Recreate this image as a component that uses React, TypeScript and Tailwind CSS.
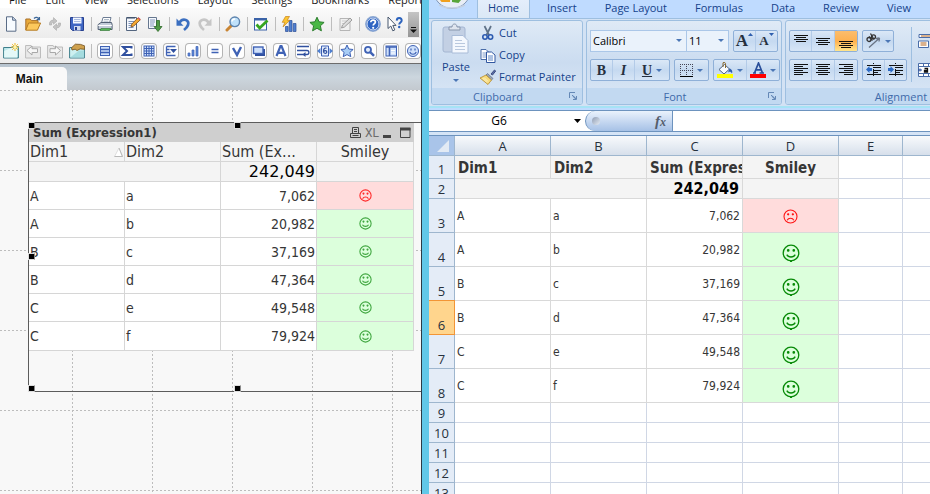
import type { ReactNode } from "react";

const UI = "font-['Open_Sans','Noto_Sans',sans-serif]";
const TAHOMA = "font-['DejaVu_Sans_Condensed','DejaVu_Sans',sans-serif]";

type Row = { d1: string; d2: string; sum: string; happy: boolean };
const ROWS: Row[] = [
  { d1: "A", d2: "a", sum: "7,062", happy: false },
  { d1: "A", d2: "b", sum: "20,982", happy: true },
  { d1: "B", d2: "c", sum: "37,169", happy: true },
  { d1: "B", d2: "d", sum: "47,364", happy: true },
  { d1: "C", d2: "e", sum: "49,548", happy: true },
  { d1: "C", d2: "f", sum: "79,924", happy: true },
];

function Svg({ w = 16, h = 16, children, className = "" }: { w?: number; h?: number; children: ReactNode; className?: string }) {
  return (
    <svg width={w} height={h} viewBox={`0 0 ${w} ${h}`} fill="none" className={`block shrink-0 ${className}`} aria-hidden="true">
      {children}
    </svg>
  );
}

function Smiley({ size, happy, color, nub = false }: { size: number; happy: boolean; color: string; nub?: boolean }) {
  return (
    <svg width={size} height={size} viewBox="0 0 18 18" fill="none" stroke={color} strokeWidth={size > 14 ? 1.3 : 1.5} className="mx-auto block" role="img" aria-label={happy ? "Happy" : "Sad"}>
      <circle cx="9" cy="9" r="7.8" />
      <circle cx="6.2" cy="6.4" r="0.7" fill={color} />
      <circle cx="11.8" cy="6.4" r="0.7" fill={color} />
      {happy ? <path d="M4.8 10.6c1.6 3.2 6.8 3.2 8.4 0" /> : <path d="M5 13.4c1.4-3 6.6-3 8 0" />}
      {nub && <path d="M8 17.3h2" strokeWidth="1.6" />}
    </svg>
  );
}

/* ---------- document window, left ---------- */

const MENU = ["File", "Edit", "View", "Selections", "Layout", "Settings", "Bookmarks", "Reports"];

const fileIcons: [string, ReactNode][] = [
  ["New", <Svg><path d="M3.5.8h6.2l3.2 3.2v11.2H3.5z" fill="#f7fbff" stroke="#5a6c86" /><path d="M9.6 1v3.2h3.2" fill="#c9d8ea" stroke="#5a6c86" /></Svg>],
  ["Open", <Svg><path d="M.8 14V3h4.4l1.3 1.6H13V8" fill="#e8a93a" stroke="#a8702a" /><path d="M.8 14.2 3.6 7h12L12.4 14.2z" fill="#fcc85c" stroke="#b67b24" /><path d="M9 2.4c2-1.8 4-1 4.8.6m.6-2v2.6h-2.8" stroke="#3e6898" strokeWidth="1.3" /></Svg>],
  ["Reload", <Svg><path d="M2.5 9c-.6-3 1.4-5 4-5V1.6L10 5 6.500 8.200V6.200C5 6.200 4.400 7.400 4.600 9z" fill="#c4c4c4" stroke="#aaa" strokeWidth=".6" /><path d="M13.500 7c.6 3-1.400 5-4 5v2.400L6 11l3.500-3.200v2c1.500 0 2.100-1.200 1.900-2.800z" fill="#c4c4c4" stroke="#aaa" strokeWidth=".6" /></Svg>],
  ["Save", <Svg><path d="M1.500 1.500h13v13h-11l-2-2z" fill="#3f66c4" stroke="#27408f" /><rect x="4" y="1.500" width="8.500" height="6" fill="#f4f8ff" /><path d="M5 3.500h6.500M5 5.500h6.500" stroke="#a9bbe0" /><rect x="5" y="10" width="6.500" height="4.500" fill="#cfd9ee" /><rect x="6" y="11" width="2" height="3" fill="#27408f" /></Svg>],
];

const printIcon: [string, ReactNode][] = [
  ["Print", <Svg><path d="M4.500 7 6 1.500h8L12.500 7z" fill="#fff" stroke="#6c7c94" /><path d="M7 3.500h5M6.500 5.200h5" stroke="#9ab" strokeWidth=".8" /><path d="M1.200 8.500 4 6.500h10.500l.6 2v5h-14z" fill="#c3ccd8" stroke="#536074" /><path d="M1.200 9.500h13.600" stroke="#fff" /><path d="M3 14.500h9.500l1.500-2H4z" fill="#57b957" stroke="#3a7a3c" strokeWidth=".7" /></Svg>],
];

const editIcons: [string, ReactNode][] = [
  ["Edit Script", <Svg><path d="M1.500 1.500h10v13h-10z" fill="#f5f8fd" stroke="#53657f" /><path d="M3 1v2M5 1v2M7 1v2M9 1v2" stroke="#35465f" /><path d="M3.500 5.500h6M3.500 7.500h5M3.500 9.500h3M3.500 11.500h5" stroke="#7d93b8" /><path d="m6 11 .8-3L13 1.800l2.300 2L8.800 10z" fill="#f4a934" stroke="#7f4d16" strokeWidth=".8" /><path d="m12.500 2.300 1-1.100 2.200 2-1 1.100z" fill="#d4545a" /></Svg>],
  ["Reload Data", <Svg><path d="M1.500 1.500h8v11h-8z" fill="#f5f8fd" stroke="#66778f" /><path d="M3 4h5M3 6h5M3 8h4M3 10h4" stroke="#8297ba" /><path d="M9.500 4.500h3v6h2.500l-4 5-4-5h2.500z" fill="#4f9a46" stroke="#2f6a2b" strokeWidth=".8" /></Svg>],
];

const undoIcons: [string, ReactNode][] = [
  ["Undo", <Svg><path d="M4.500 6.500C8 1.500 15 4 13 9c-.7 2-2 3.500-4 5" stroke="#3b6fc0" strokeWidth="2.800" /><path d="M1.500 2.500v7.200h7z" fill="#3b6fc0" /></Svg>],
  ["Redo", <Svg><path d="M11.500 6.500C8 1.500 1 4 3 9c.7 2 2 3.500 4 5" stroke="#c6c6c6" strokeWidth="2.800" /><path d="M14.500 2.500v7.200h-7z" fill="#c6c6c6" /></Svg>],
];

const searchIcon: [string, ReactNode][] = [
  ["Search", <Svg><path d="m2 14 4.500-4.500" stroke="#c98534" strokeWidth="3" strokeLinecap="round" /><circle cx="9.800" cy="5.800" r="4.800" fill="#bfe1fa" stroke="#5d83ad" strokeWidth="1.400" /><path d="M7 5.500c.3-1.800 1.800-2.500 3.200-2.400" stroke="#fff" strokeWidth="1.500" /></Svg>],
];

const checkIcon: [string, ReactNode][] = [
  ["Current Selections", <Svg><rect x="1.500" y="2.500" width="12" height="11.500" fill="#fafdff" stroke="#3b62a8" /><path d="M1.500 3.500h12" stroke="#3b62a8" strokeWidth="2" /><path d="m3.500 8.500 3.200 3.500 7.800-7.500" stroke="#35a51f" strokeWidth="2.800" /></Svg>],
];

const chartIcon: [string, ReactNode][] = [
  ["Quick Chart", <Svg><path d="M4.500 10.500h2.600v5H4.500zM8.200 4.500h2.800v11H8.200zM12.200 7.500H15v8h-2.800z" fill="#4f7fd0" stroke="#2c4f96" strokeWidth=".7" /><path d="M4.500.5h4L6.200 4.300h2.600L2 11l1.800-4.700H1.200z" fill="#fcc530" stroke="#c7821a" strokeWidth=".7" /></Svg>],
];

const starIcon: [string, ReactNode][] = [
  ["Add Bookmark", <Svg><path d="m8 1.200 2.100 4.600 5 .6-3.700 3.400 1 5L8 12.300l-4.400 2.500 1-5L.9 6.400l5-.6z" fill="#49b845" stroke="#2b7d2c" /></Svg>],
];

const noteIcon: [string, ReactNode][] = [
  ["Notes", <Svg><path d="M3 2.500h10v12H3z" fill="#f0f0f0" stroke="#b5b5b5" /><path d="M5 5h5M5 7.500h4" stroke="#ccc" /><path d="m4.500 12 1-3 7.500-7 2 2-7.500 7z" fill="#ddd" stroke="#9c9c9c" /></Svg>],
];

const helpIcons: [string, ReactNode][] = [
  ["Help", <Svg><circle cx="8" cy="8" r="7.300" fill="#2f65c3" stroke="#8ea9d2" strokeWidth="1.200" /><circle cx="8" cy="8" r="6" stroke="#fff" strokeWidth=".8" /><path d="M5.800 6.200c0-3 4.600-2.700 4.600-.2 0 1.600-2.200 1.700-2.200 3.600" stroke="#fff" strokeWidth="1.700" /><circle cx="8.200" cy="11.800" r="1.100" fill="#fff" /></Svg>],
  ["What's This", <Svg><path d="M1 1v11.500l2.800-2.500 2 4.800 2-.9-2-4.500H9z" fill="#fff" stroke="#46566c" /><path d="M9.700 4.600c.2-3.600 5-3.200 5 0 0 2-2.500 2-2.500 4" stroke="#2b62bd" strokeWidth="1.900" /><circle cx="12.200" cy="11" r="1.200" fill="#2b62bd" /></Svg>],
];

const fileGroups = [fileIcons, printIcon, editIcons, undoIcons, searchIcon, checkIcon, chartIcon, starIcon, noteIcon, helpIcons];

const sheetIcons: [string, ReactNode][] = [
  ["Add Sheet", <Svg><path d="M.6 4.500h9v-1h5.800v11.500H.6z" fill="#bfe9ec" stroke="#3f7f8c" /><path d="M1.200 8 8 5h6v9.500H1.200z" fill="#e4f8f8" /><path d="M12 0v8M8 4h8M9.200 1.200l5.600 5.600M14.800 1.200 9.200 6.800" stroke="#f0b929" /><circle cx="12" cy="4" r="1.700" fill="#fff3a8" /></Svg>],
  ["Previous Sheet", <Svg><path d="M.6 5V2.500h5.500L7 4h8.500v11H.6z" fill="#e9e9e9" stroke="#bcbcbc" /><path d="m2 7.500 5-4.500v2.700h5.500v3.800H7V12z" fill="#f7f7f7" stroke="#a8a8a8" /></Svg>],
  ["Next Sheet", <Svg><path d="M.6 5V2.500h5.500L7 4h8.500v11H.6z" fill="#e9e9e9" stroke="#bcbcbc" /><path d="M13.500 7.500 8.500 3v2.700H3v3.800h5.500V12z" fill="#f7f7f7" stroke="#a8a8a8" /></Svg>],
  ["Sheet Properties", <Svg><path d="M.6 4.500h14.800v10.500H.6z" fill="#cdf0f0" stroke="#3f7f8c" /><path d="M1.200 14.400 10 7.500h5v7z" fill="#a5dcdf" /><path d="m2.500 4.800 3.800-3.600 5.200.2 4.200 1.500v3.400l-4.500-.4L8 7.500 6.200 6.200 3 7z" fill="#cfa14e" stroke="#6d4b18" strokeWidth=".8" /></Svg>],
];

const B = "#3f62b5";
const objectIcons: [string, ReactNode][] = [
  ["List Box", <Svg><rect x="3.500" y="3.500" width="9" height="9" fill="#cfe0fa" stroke={B} /><path d="M3.500 6.500h9M3.500 9.500h9" stroke={B} strokeWidth="1.400" /></Svg>],
  ["Statistics Box", <Svg><path d="M12.500 5.500V4H4l4 4-4 4h8.500v-1.500" stroke="#30509f" strokeWidth="2" /></Svg>],
  ["Table Box", <Svg><rect x="3" y="3" width="10" height="10" fill="#cfe0fa" stroke={B} /><path d="M3 5.500h10M3 8h10M3 10.500h10M5.500 3v10M8 3v10M10.500 3v10" stroke={B} /></Svg>],
  ["Multi Box", <Svg><path d="M3.500 3.500h9M3.500 6.500h3M3.500 12.500h9M3.500 9.500h4M3.500 3.500v9" stroke={B} strokeWidth="1.300" /><path d="M7 6h7l-3.500 4z" fill="#30509f" /></Svg>],
  ["Chart", <Svg><path d="M3 10h2v3H3zM7 7h2v6H7zM11 3.500h2V13h-2z" fill="#5b88d8" stroke={B} strokeWidth=".7" /></Svg>],
  ["Input Box", <Svg><path d="M4.500 6.500h7M4.500 9.500h7" stroke={B} strokeWidth="1.700" /></Svg>],
  ["Current Selections Box", <Svg><path d="m4 5 4 7 4-8" stroke={B} strokeWidth="2.400" /></Svg>],
  ["Button", <Svg><rect x="4" y="6" width="10" height="7" fill="#30509f" /><rect x="2.500" y="4" width="9.500" height="6.500" fill="#cfe0fa" stroke={B} strokeWidth="1.400" /></Svg>],
  ["Text Object", <Svg><path d="m3.500 13 4-10h1l4 10M5 9.800h6" stroke={B} strokeWidth="2.200" /></Svg>],
  ["Line Object", <Svg><path d="M2 3.500h12M2 7.500h10M2 11.500h8" stroke="#30509f" strokeWidth="1.400" /><path d="M12 7.500c2.500 0 2.500 4 0 4h-3" stroke="#30509f" strokeWidth="1.300" /><path d="M10.500 9v5L7.500 11.500z" fill="#30509f" /></Svg>],
  ["Slider", <Svg><path d="M4.500 3h7v10h-7z" fill="#e3edfc" stroke={B} /><path d="M0 8l3.500-3v6zM16 8l-3.500-3v6z" fill="#4f7fd0" /><path d="M9.500 5.200c-2-.7-3 .6-3 3 0 3 3.300 2.700 3.300.9 0-1.800-2.500-1.800-3.200-.3" stroke="#30509f" strokeWidth="1.200" /></Svg>],
  ["Bookmark Object", <Svg><path d="m8 2 1.800 4 4.300.5-3.200 2.900.9 4.300L8 11.600l-3.800 2.100.9-4.300L1.900 6.500l4.300-.5z" fill="#a8cdf5" stroke={B} /></Svg>],
  ["Search Object", <Svg><circle cx="7" cy="6.800" r="3" fill="#e3edfc" stroke={B} strokeWidth="1.800" /><path d="m9.500 9.300 3.500 3.500" stroke={B} strokeWidth="2.400" /></Svg>],
  ["Container", <Svg><rect x="3" y="3" width="10.500" height="10" fill="#cfe0fa" stroke={B} /><path d="M3 4h10.500M6.500 4v9" stroke={B} strokeWidth="1.600" /><path d="M8 7.500h4M8 10h4" stroke="#fff" /></Svg>],
  ["Custom Object", <Svg><circle cx="8" cy="8" r="5.500" fill="#cfe0fa" stroke={B} /><path d="M6 5.500v2M10 5.500v2M4.800 9c1 3 5.400 3 6.400 0" stroke={B} strokeWidth="1.200" /></Svg>],
];

function ToolSep() {
  return (
    <span className="flex w-[6px] shrink-0 justify-center">
      <span className="h-[14px] w-px bg-[#bdbdbd]" />
    </span>
  );
}

function Handle({ place }: { place: string }) {
  return <span className={`absolute size-[7px] border border-[#dcdcdc] border-r-[#8a8a8a] bg-black ${place}`} />;
}

function CanvasGrid() {
  return (
    <svg className="absolute inset-0 h-full w-full" aria-hidden="true">
      <defs>
        <pattern id="canvas-grid" width="80" height="80" patternUnits="userSpaceOnUse">
          <path d="M0 .5h80" stroke="#bdbdbd" strokeDasharray="2 2" />
          <path d="M72.500 0v80" stroke="#bdbdbd" strokeDasharray="2 2" />
        </pattern>
      </defs>
      <rect width="100%" height="100%" fill="url(#canvas-grid)" />
    </svg>
  );
}

function StraightTable() {
  const line = "border-b border-r border-[#d6d6d6]";
  return (
    <table className={`w-[385px] table-fixed border-separate border-spacing-0 text-[#363636] ${TAHOMA}`}>
      <colgroup>
        <col className="w-[96px]" />
        <col className="w-[96px]" />
        <col className="w-[96px]" />
        <col className="w-[97px]" />
      </colgroup>
      <thead>
        <tr className="bg-[#f4f4f4] text-[16px] leading-4">
          <th className={`h-[20px] p-0 pl-px text-left font-normal ${line}`}>
            <span className="flex items-center justify-between">
              Dim1
              <Svg w={10} h={10}><path d="M.5 9.500 5 1l3.500 8.500z" fill="#fff" stroke="#dedede" /><path d="M5 1l3.500 8.500H.5" stroke="#b8b8b8" /></Svg>
            </span>
          </th>
          <th className={`p-0 pl-px text-left font-normal ${line}`}>Dim2</th>
          <th className={`p-0 pl-px text-left font-normal ${line}`}>Sum (Ex...</th>
          <th className={`p-0 text-center font-normal ${line}`}>Smiley</th>
        </tr>
        <tr className="bg-[#f4f4f4] leading-4">
          <td colSpan={2} className={`h-[20px] p-0 ${line}`} />
          <td className={`p-0 pr-px text-right font-['DejaVu_Sans',sans-serif] text-[16px] text-black ${line}`}>242,049</td>
          <td className={`p-0 ${line}`} />
        </tr>
      </thead>
      <tbody>
        {ROWS.map((r) => (
          <tr key={r.d2} className="h-[28px] bg-white text-[14px] leading-4 last:h-[29px]">
            <td className={`p-0 pl-px ${line}`}>{r.d1}</td>
            <td className={`p-0 pl-px ${line}`}>{r.d2}</td>
            <td className={`p-0 pr-px text-right ${line}`}>{r.sum}</td>
            <td className={`p-0 ${line} ${r.happy ? "bg-[#dcffdc]" : "bg-[#ffdcdc]"}`}>
              <Smiley size={13} happy={r.happy} color={r.happy ? "#3fa63f" : "#ff2a2a"} />
            </td>
          </tr>
        ))}
      </tbody>
    </table>
  );
}

function DocumentPane() {
  return (
    <section className="flex min-w-0 flex-col overflow-hidden bg-[#f8f8f8]">
      <nav className={`flex h-2 shrink-0 items-end gap-[19px] overflow-hidden bg-white pl-[9px] text-[11px] leading-4 whitespace-nowrap text-[#1a1a1a] ${UI}`}>
        {MENU.map((m) => (
          <button key={m} type="button">{m}</button>
        ))}
      </nav>
      <div className="flex h-[30px] shrink-0 items-center overflow-hidden bg-linear-to-b from-[#fbfbfb] to-[#ececec] pt-[2px]">
        {fileGroups.map((group, i) => (
          <div key={i} className="flex shrink-0 items-center">
            {i > 0 && <ToolSep />}
            {group.map(([label, icon]) => (
              <button key={label} type="button" aria-label={label} className="flex w-[22px] justify-center">{icon}</button>
            ))}
          </div>
        ))}
        <button type="button" aria-label="Toolbar options" className="ml-[2px] flex h-[25px] w-[11px] shrink-0 items-end justify-center bg-linear-to-b from-[#c4c4c4] to-[#969696] pb-1">
          <Svg w={7} h={6}><path d="M1 .5h5" stroke="#111" /><path d="M0 2.500h7L3.500 6z" fill="#111" /></Svg>
        </button>
      </div>
      <div className="flex h-[26px] shrink-0 items-center overflow-hidden border-b border-[#6c6c6c] bg-linear-to-b from-[#fbfbfb] to-[#ececec]">
        {sheetIcons.map(([label, icon]) => (
          <button key={label} type="button" aria-label={label} className="flex w-[22px] shrink-0 justify-center">{icon}</button>
        ))}
        <ToolSep />
        {objectIcons.map(([label, icon]) => (
          <span key={label} className="flex w-[22px] shrink-0 justify-center">
            <button type="button" aria-label={label} className="flex size-4 items-center justify-center rounded-[4px] bg-white ring-1 ring-[#b4b4b4] ring-inset">
              <Svg>{icon}</Svg>
            </button>
          </span>
        ))}
      </div>
      <div className="flex h-[26px] shrink-0 items-end bg-linear-to-b from-[#b6c3ce] via-[#ccd6de] to-[#c3c9cf]">
        <button type="button" className="h-[23px] w-[67px] rounded-tr-[5px] bg-[#f9f9f9] pr-2 font-['Liberation_Sans',Arial,sans-serif] text-[12px] font-bold text-[#111]">Main</button>
      </div>
      <main className="relative flex-1 overflow-hidden bg-[#f8f8f8] pt-8 pl-[28px]">
        <CanvasGrid />
        <article className="relative h-[270px] border border-r-0 border-[#5c5c5c]">
          <header className={`flex h-[19px] w-[385px] items-center justify-between bg-[#cfcfcf] pr-[3px] pl-[4px] ${TAHOMA}`}>
            <h2 className="text-[13px] leading-4 font-bold text-[#363636]">Sum (Expression1)</h2>
            <span className="flex items-center gap-[4px] text-[#444]">
              <button type="button" aria-label="Print"><Svg w={11} h={11}><path d="M2.500 6.500v-6h6v6M4 2.500h3M4 4.500h3M.5 6.500h10v4H.5zM2.500 8.500h6" stroke="#444" /></Svg></button>
              <button type="button" className="font-['Roboto','Open_Sans',sans-serif] text-[12px] leading-[14px] text-[#6c6c6c]">XL</button>
              <button type="button" aria-label="Minimize"><Svg w={9} h={11}><path d="M0 9.500h8" stroke="#444" strokeWidth="3" /></Svg></button>
              <button type="button" aria-label="Maximize" className="pl-1"><Svg w={11} h={11}><path d="M.5 1v9.500h9.500V1" stroke="#444" /><path d="M0 2h10.500" stroke="#444" strokeWidth="3" /></Svg></button>
            </span>
          </header>
          <StraightTable />
          <Handle place="-top-px -left-px" />
          <Handle place="-top-px left-[205px]" />
          <Handle place="top-[130px] -left-px" />
          <Handle place="-bottom-px -left-px" />
          <Handle place="-bottom-px left-[205px]" />
        </article>
      </main>
    </section>
  );
}

/* ---------- spreadsheet window, right ---------- */

function Caret() {
  return <Svg w={6} h={3}><path d="M0 0h6L3 3z" fill="#4b76b5" /></Svg>;
}

function Group({ title, width, children }: { title: string; width: string; children: ReactNode }) {
  return (
    <section className={`flex shrink-0 flex-col overflow-hidden rounded-[3px] border border-[#9ebfe0] bg-linear-to-b from-[#dfeaf6] via-[#cbdcf0] to-[#dbe8f6] ${width}`}>
      <div className="min-h-0 flex-1">{children}</div>
      <footer className="relative flex h-4 shrink-0 items-center justify-center bg-[#c2d9f1] pt-px pr-[18px] text-[11px] leading-4 text-[#3e6aaa]">
        {title}
        <button type="button" aria-label={`${title} options`} className="absolute right-[5px] bottom-[4px]">
          <Svg w={8} h={8}><path d="M.5 6V.5H6" stroke="#6488b6" /><path d="M3 3.500h1M7.500 4v3.500H4" stroke="#6488b6" /><path d="m4 4 3 3" stroke="#6488b6" strokeWidth="1.300" /></Svg>
        </button>
      </footer>
    </section>
  );
}

function Cluster({ children }: { children: ReactNode }) {
  return <div className="flex h-[22px] divide-x divide-[#b3cbe8] overflow-hidden rounded-[2px] border border-[#8fb0d8] bg-linear-to-b from-[#dbe8f7] via-[#c5d9f0] to-[#d6e5f6]">{children}</div>;
}

function Tool({ label, w, children, on = false }: { label: string; w: string; children: ReactNode; on?: boolean }) {
  return (
    <button type="button" aria-label={label} className={`flex items-center justify-center gap-1 ${w} ${on ? "bg-linear-to-b from-[#fbbd6d] via-[#fdb04e] to-[#ffe58c]" : ""}`}>
      {children}
    </button>
  );
}

const serif = "font-['Liberation_Serif',serif] font-bold text-[#26303e]";

function ClipboardGroup() {
  const items: [string, ReactNode][] = [
    ["Cut", <Svg><path d="M4.500 1 9 10M11 1 6.500 10" stroke="#5f7288" strokeWidth="1.700" /><circle cx="5" cy="12" r="2.200" stroke="#2c5ab0" strokeWidth="1.600" /><circle cx="10.500" cy="12" r="2.200" stroke="#2c5ab0" strokeWidth="1.600" /></Svg>],
    ["Copy", <Svg><path d="M1 2.500h5l3 3v7H1z" fill="#fff" stroke="#4a6da8" /><path d="M2.500 6h4M2.500 8h4M2.500 10h4" stroke="#7e9cca" /><path d="M6.500 5h5l3.500 3v7.500H6.500z" fill="#fff" stroke="#3157a0" /><path d="M8 9h5M8 11h5M8 13h5" stroke="#5d86c6" /></Svg>],
    ["Format Painter", <Svg><path d="m11 5 3.500-4 1.200 1L12.500 6z" fill="#5a6fa8" stroke="#3e4c80" /><path d="m7.500 4.500 5.500 5-1.500 1.500L6 6z" fill="#9aa5b8" stroke="#5f6b82" strokeWidth=".7" /><path d="M6 6 11.500 11 8 15.500 0 9z" fill="#f6d97a" stroke="#b58a2a" strokeWidth=".8" /><path d="m4 8.500 4 4M2.500 9 7 13.500" stroke="#fff4c4" /></Svg>],
  ];
  return (
    <Group title="Clipboard" width="w-[152px]">
      <div className="flex gap-[8px] pt-px pl-[8px] text-[11px] text-[#15428b]">
        <button type="button" className="flex w-[32px] flex-col items-center pt-px">
          <Svg w={28} h={32}>
            <rect x="1" y="4" width="22" height="25" rx="2" fill="#c3d0e4" stroke="#a4b6d2" />
            <path d="M7 7V4h3c0-4 5-4 5 0h3v3z" fill="#dfe5ee" stroke="#8795ab" />
            <path d="M10 12.500h11l5 5V30H10z" fill="#f4f8fe" stroke="#a9bcd8" />
            <path d="M13 17.500h7M13 20.500h10M13 23.500h10M13 26.500h10" stroke="#b9c8de" />
          </Svg>
          <span className="mt-1 leading-4">Paste</span>
          <span className="mt-1"><Caret /></span>
        </button>
        <div className="flex flex-col">
          {items.map(([label, icon]) => (
            <button key={label} type="button" className="flex h-[22px] items-center gap-[3px] whitespace-nowrap">
              {icon}
              {label}
            </button>
          ))}
        </div>
      </div>
    </Group>
  );
}

function Picker({ label, value, w }: { label: string; value: string; w: string }) {
  return (
    <label className={`relative block h-[22px] border border-[#abc7e8] bg-[#eaf2fb] ${w}`}>
      <select aria-label={label} className="block h-[20px] w-full appearance-none pl-[2px] text-[11px] leading-4 text-black" defaultValue={value}>
        <option>{value}</option>
      </select>
      <span className="pointer-events-none absolute top-2 right-[4px]"><Caret /></span>
    </label>
  );
}

function FontGroup() {
  return (
    <Group title="Font" width="w-[196px]">
      <div className="flex flex-col gap-[7px] pt-[9px] pl-[3px]">
        <div className="flex">
          <Picker label="Font name" value="Calibri" w="w-[97px]" />
          <Picker label="Font size" value="11" w="w-[43px] -ml-px" />
          <div className="ml-1">
            <Cluster>
              <Tool label="Grow font" w="w-[22px]"><span className={`flex text-[17px] leading-4 ${serif}`}>A<Svg w={5} h={3}><path d="M0 3h5L2.500 0z" fill="#2f5fae" /></Svg></span></Tool>
              <Tool label="Shrink font" w="w-[21px]"><span className={`flex text-[13px] leading-4 ${serif}`}>A<Svg w={5} h={3}><path d="M0 0h5L2.500 3z" fill="#2f5fae" /></Svg></span></Tool>
            </Cluster>
          </div>
        </div>
        <div className="flex gap-[4px]">
          <Cluster>
            <Tool label="Bold" w="w-[22px]"><span className={`text-[14px] ${serif}`}>B</span></Tool>
            <Tool label="Italic" w="w-[22px]"><span className={`text-[14px] italic ${serif}`}>I</span></Tool>
            <Tool label="Underline" w="w-[34px]"><span className={`text-[14px] underline ${serif}`}>U</span><Caret /></Tool>
          </Cluster>
          <Cluster>
            <Tool label="Borders" w="w-[33px]"><Svg w={13} h={13}><path d="M.5 0v12M6.500 0v12M12.500 0v12M0 .5h13M0 6.500h13" stroke="#445" strokeDasharray="1 1" /><path d="M0 12.500h13" stroke="#000" /></Svg><Caret /></Tool>
          </Cluster>
          <Cluster>
            <Tool label="Fill colour" w="w-[33px]"><Svg><path d="m2 7.500 5.500-5 5 4.500-5.500 5z" fill="#f7fbff" stroke="#4a5f80" /><path d="M6 5V.800c1.500-1 2.500 0 2.500 1V6" stroke="#8a6a30" /><path d="M12.500 6.500c2 .5 3.500 2.500 2.500 5-1-2-2.500-2.500-4-1z" fill="#2f5fae" /><rect y="12" width="16" height="4" fill="#ff0" /></Svg><Caret /></Tool>
            <Tool label="Font colour" w="w-[32px]"><Svg><path d="M3 11h3M9.500 11H14M4.500 11 8.500 1l4 10M5.800 7.800h5" stroke="#2a4f9a" strokeWidth="1.700" /><rect y="12" width="16" height="4" fill="red" /></Svg><Caret /></Tool>
          </Cluster>
        </div>
      </div>
    </Group>
  );
}

function AlignIcon({ d }: { d: string }) {
  return <Svg w={14} h={16}><path d={d} stroke="#111" /></Svg>;
}

function AlignmentGroup() {
  return (
    <Group title="Alignment" width="w-[250px]">
      <div className="flex pt-[6px] pl-[3px]">
        <div className="flex flex-col gap-[7px] pt-[3px]">
          <div className="flex gap-[4px]">
            <Cluster>
              <Tool label="Top" w="w-[22px]"><AlignIcon d="M0 2.500h14M2 4.500h10M0 6.500h14M2 8.500h10" /></Tool>
              <Tool label="Middle" w="w-[23px]"><AlignIcon d="M0 5.500h14M2 7.500h10M0 9.500h14M2 11.500h10" /></Tool>
              <Tool label="Bottom" w="w-[22px]" on><AlignIcon d="M0 8.500h14M2 10.500h10M0 12.500h14M2 14.500h10" /></Tool>
            </Cluster>
            <Cluster>
              <Tool label="Orientation" w="w-[30px]"><Svg><g stroke="#333" strokeWidth="1.300"><circle cx="4" cy="6.500" r="2" /><path d="m4 3.500 3.500 4" /><circle cx="8.500" cy="3.800" r="2" /><path d="M5.500.5 9 6.500" /></g><path d="m4 14.500 10-9M14.500 5l-3.500.5M14.500 5l-.5 3.500" stroke="#6a7484" strokeWidth="1.300" /></Svg><Caret /></Tool>
            </Cluster>
          </div>
          <div className="flex gap-[4px]">
            <Cluster>
              <Tool label="Left" w="w-[22px]"><AlignIcon d="M0 2.500h14M0 4.500h9M0 6.500h14M0 8.500h9M0 10.500h14M0 12.500h9" /></Tool>
              <Tool label="Center" w="w-[23px]"><AlignIcon d="M0 2.500h14M2 4.500h10M0 6.500h14M2 8.500h10M0 10.500h14M2 12.500h10" /></Tool>
              <Tool label="Right" w="w-[22px]"><AlignIcon d="M0 2.500h14M5 4.500h9M0 6.500h14M5 8.500h9M0 10.500h14M5 12.500h9" /></Tool>
            </Cluster>
            <Cluster>
              <Tool label="Decrease indent" w="w-[22px]"><Svg><path d="M1 3.500h14M7 5.500h8M7 8.500h8M7 10.500h5M1 12.500h14" stroke="#111" /><path d="M7.500 1v14" stroke="#111" strokeDasharray="1 1" /><path d="M0 7.500 3.500 4v2H6v3H3.500v2z" fill="#2c6ac4" /></Svg></Tool>
              <Tool label="Increase indent" w="w-[21px]"><Svg><path d="M1 3.500h14M7 5.500h8M7 8.500h8M7 10.500h5M1 12.500h14" stroke="#111" /><path d="M7.500 1v14" stroke="#111" strokeDasharray="1 1" /><path d="M6 7.500 2.500 4v2H0v3h2.500v2z" fill="#2c6ac4" /></Svg></Tool>
            </Cluster>
          </div>
        </div>
        <span className="ml-1 h-[55px] w-px bg-[#9ebfe0]" />
        <div className="ml-[6px] flex flex-col gap-[13px] pt-[6px]">
          <button type="button" aria-label="Wrap text"><Svg><path d="M1 1.500h15v3H1z" fill="#fff" stroke="#4a6da8" /><path d="M3 3h13" stroke="#b5651d" /><path d="M.5 8h10v6.500H.5z" fill="#fff" stroke="#4a6da8" /><path d="M2.500 10h6M2.500 12h6" stroke="#b5651d" /></Svg></button>
          <button type="button" aria-label="Merge and center"><Svg><path d="M.5 1.500H16v13H.5zM.5 4.500H16M.5 11.500H16M5.500 1.500v3M10.500 1.500v3M5.500 11.500v3M10.500 11.500v3" fill="#fff" stroke="#4a6da8" /><path d="M0 8h4M2 6.500v3M12 8h4" stroke="#2c4f96" /><path d="M6.500 6.500h3V10h-3V8.500h3" stroke="#111" strokeWidth="1.300" /></Svg></button>
        </div>
      </div>
    </Group>
  );
}

const TABS = ["Insert", "Page Layout", "Formulas", "Data", "Review", "View"];
const COLS = ["A", "B", "C", "D", "E", "F"];

function SheetGrid() {
  const cell = "border-b border-r border-[#d9d9d9] p-0";
  const blank = "border-b border-r last:border-r-0 border-[#d0d7e5] p-0";
  const head = "border-b border-r last:border-r-0 border-[#9eb6ce] p-0 font-normal text-[#27313d]";
  const num = (n: number) => (
    <th scope="row" className={`${head} pb-px align-bottom text-[13px] leading-4 ${UI} ${n === 6 ? "border-[#f29536] bg-[#ffd58d] shadow-[0_-1px_0_#f29536]" : "bg-[#e4ecf7]"}`}>{n}</th>
  );
  const bold = "overflow-hidden leading-4 font-bold whitespace-nowrap";
  return (
    <table className={`w-full table-fixed border-separate border-spacing-0 bg-white text-[#363636] ${TAHOMA}`}>
      <colgroup>
        <col className="w-[26px]" />
        <col className="w-[96px]" />
        <col className="w-[96px]" />
        <col className="w-[96px]" />
        <col className="w-[96px]" />
        <col className="w-[64px]" />
        <col />
      </colgroup>
      <thead>
        <tr className={`bg-linear-to-b from-[#f8fafc] to-[#d5deea] text-[13px] leading-4 ${UI}`}>
          <th className={`${head} h-[20px] bg-[#a9c4e9]`}>
            <Svg w={22} h={16}><path d="M20 2v12H8z" fill="#e2eaf4" /></Svg>
          </th>
          {COLS.map((c) => (
            <th key={c} scope="col" className={head}>{c === "F" ? "" : c}</th>
          ))}
        </tr>
      </thead>
      <tbody>
        <tr className="h-[23px] text-[15px]">
          {num(1)}
          <td className={`${cell} bg-[#f4f4f4] pt-px pl-[3px] ${bold}`}>Dim1</td>
          <td className={`${cell} bg-[#f4f4f4] pt-px pl-[3px] ${bold}`}>Dim2</td>
          <td className={`${cell} bg-[#f4f4f4] pt-px pl-[3px] ${bold}`}>Sum (Expres</td>
          <td className={`${cell} bg-[#f4f4f4] pt-px text-center ${bold}`}>Smiley</td>
          <td className={blank} />
          <td className={blank} />
        </tr>
        <tr className="h-[20px] text-[16px]">
          {num(2)}
          <td colSpan={2} className={`${cell} bg-[#f4f4f4]`} />
          <td className={`${cell} bg-[#f4f4f4] pr-[3px] text-right text-black ${bold}`}>242,049</td>
          <td className={`${cell} bg-[#f4f4f4]`} />
          <td className={blank} />
          <td className={blank} />
        </tr>
        {ROWS.map((r, i) => (
          <tr key={r.d2} className="h-[34px] text-[12px] leading-4">
            {num(i + 3)}
            <td className={`${cell} pl-[2px]`}>{r.d1}</td>
            <td className={`${cell} pl-[2px]`}>{r.d2}</td>
            <td className={`${cell} pr-[2px] text-right`}>{r.sum}</td>
            <td className={`${cell} ${r.happy ? "bg-[#dcffdc] pt-[6px]" : "bg-[#ffdcdc] pt-[2px]"}`}>
              <Smiley size={r.happy ? 18 : 15} happy={r.happy} color={r.happy ? "#078a07" : "#ff1414"} nub={r.happy} />
            </td>
            <td className={blank} />
            <td className={blank} />
          </tr>
        ))}
        {[9, 10, 11, 12, 13].map((n) => (
          <tr key={n} className="h-[20px]">
            {num(n)}
            {COLS.map((c) => (
              <td key={c} className={blank} />
            ))}
          </tr>
        ))}
      </tbody>
    </table>
  );
}

function SpreadsheetPane() {
  return (
    <section className={`flex min-w-0 flex-col overflow-hidden bg-[#bfdbff] ${UI}`}>
      <nav className="flex h-[18px] shrink-0 overflow-hidden text-[11px] leading-4 whitespace-nowrap text-[#15428b]">
        <button type="button" aria-label="Office" className="h-[10px] w-[48px] shrink-0 overflow-hidden">
          <Svg w={48} h={10}>
            <circle cx="23" cy="-10" r="18.500" fill="#e9eef6" stroke="#7f95b6" />
            <path d="M11 0h10v2H12.500z" fill="#f0a01e" />
            <path d="M23 0h9l-2.500 3-6.500-1z" fill="#58a63a" />
            <path d="M10 5c7 4 19 4 26 0" stroke="#c4d0e2" strokeWidth="1.500" />
          </Svg>
        </button>
        <button type="button" className="mr-[3px] w-[53px] shrink-0 border-x border-[#9ebfe0] bg-linear-to-b from-[#e4eefb] to-[#dbe8f6] pb-[3px]">Home</button>
        {TABS.map((t) => (
          <button key={t} type="button" className="shrink-0 px-[14px] pb-[3px]">{t}</button>
        ))}
      </nav>
      <div className="flex h-[90px] shrink-0 gap-[3px] overflow-hidden border-t border-b-2 border-t-[#9ebfe0] border-b-[#a6e3f5] bg-[#d3e2f4] px-[2px] py-px">
        <ClipboardGroup />
        <FontGroup />
        <AlignmentGroup />
      </div>
      <div className="mt-[2px] flex h-[22px] shrink-0 border-y border-[#6d93be] bg-white">
        <div className="flex w-[156px] shrink-0 items-center">
          <input aria-label="Name box" defaultValue="G6" className="w-[140px] min-w-0 text-center text-[12px] text-black" />
          <button type="button" aria-label="Names" className="pl-1"><Svg w={9} h={5}><path d="M1 0h7L4.500 4z" fill="#000" /></Svg></button>
        </div>
        <div className="flex w-[88px] items-center justify-between rounded-l-full border-x border-[#6d93be] bg-linear-to-b from-[#eaf2fc] to-[#a6c1e6] pr-[6px] pl-[6px]">
          <span className="size-2 rounded-full bg-linear-to-br from-[#8f9db3] to-[#e6ecf4]" />
          <button type="button" aria-label="Insert function" className="font-['Liberation_Serif',serif] text-[15px] leading-4 font-bold text-[#555e6c] italic">f<span className="text-[12px]">x</span></button>
        </div>
        <input aria-label="Formula" className="min-w-0 flex-1 text-[13px]" />
      </div>
      <div className="h-1 shrink-0 border-b border-[#6d93be] bg-[#d5e4f6]" />
      <div className="min-h-0 flex-1 overflow-hidden">
        <SheetGrid />
      </div>
    </section>
  );
}

export default function App() {
  return (
    <div className="grid h-screen grid-cols-[421fr_8px_501fr] grid-rows-1 overflow-hidden">
      <DocumentPane />
      <div className="border-l border-[#2b3b46] bg-[#62c8e8]" />
      <SpreadsheetPane />
    </div>
  );
}
